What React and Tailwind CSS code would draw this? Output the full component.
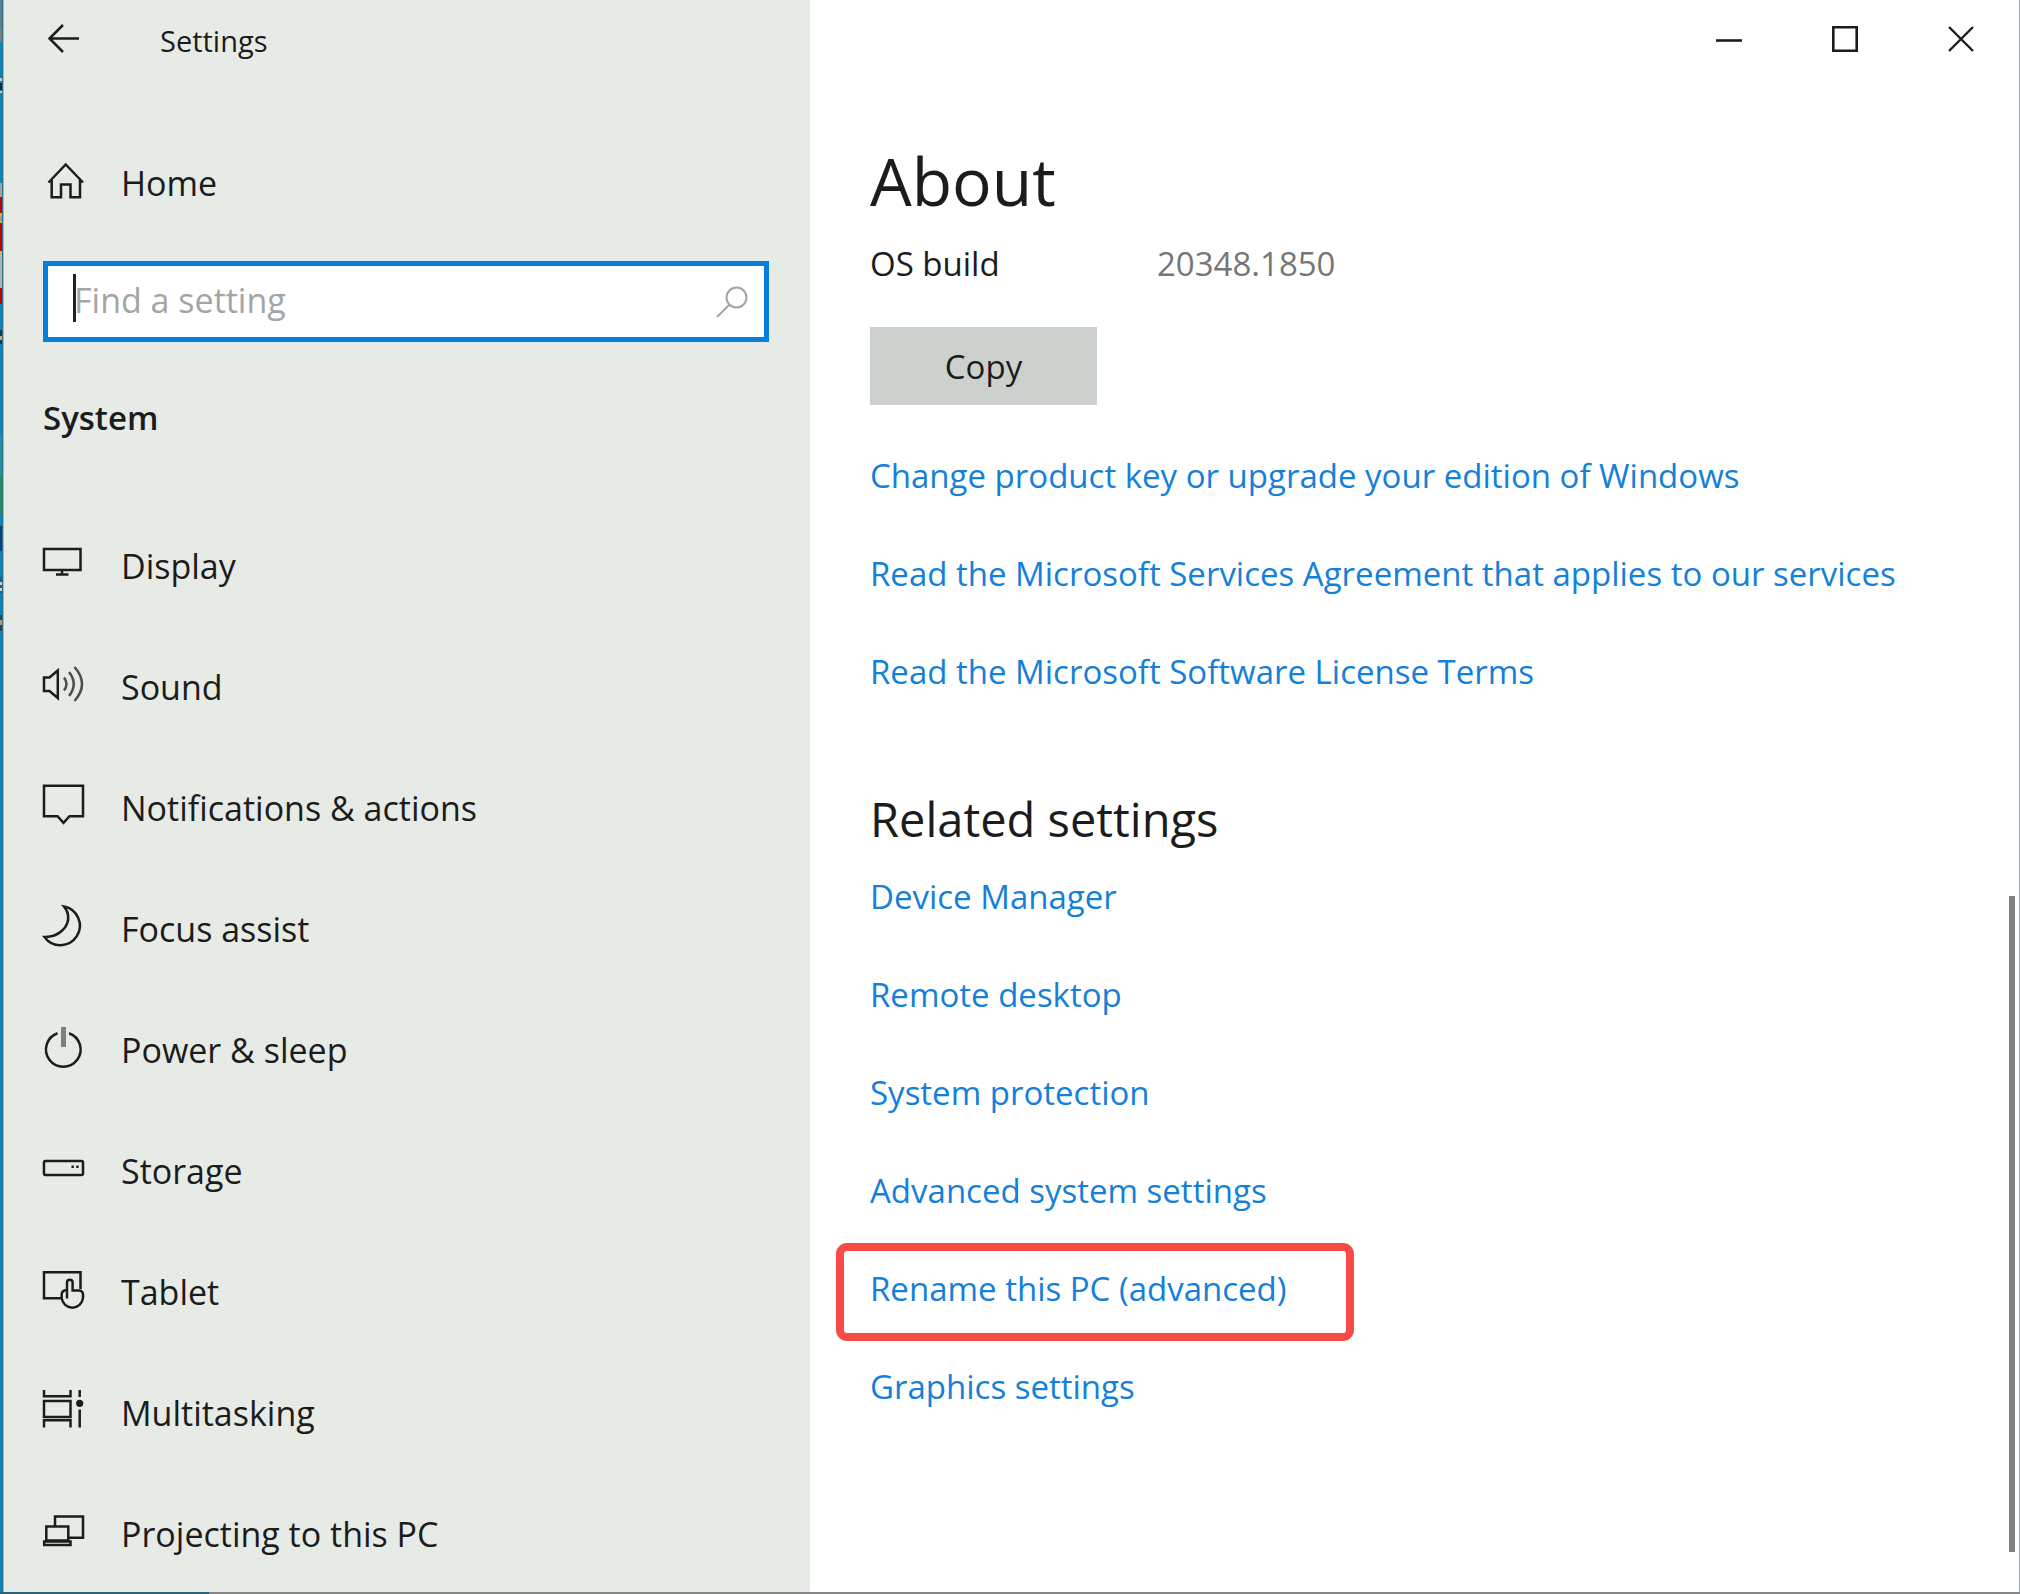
const NAV_ITEMS = [
  {
    label: 'Display',
    icon: (
      <>
        <rect x="1" y="4" width="36.5" height="21" />
        <path d="M19 25v4.5M13 29.5h12.5" />
      </>
    ),
  },
  {
    label: 'Sound',
    icon: (
      <>
        <path d="M1 11.5h5.5L14.8 4.5v27.5L6.5 25H1z" />
        <path d="M21 11.5q5 6.5 0 13M26 6q9.5 12 0 24M31.5 1q15 17 0 34" stroke="#4b4e4b" />
      </>
    ),
  },
  {
    label: 'Notifications & actions',
    icon: <path d="M1-1.2H40V29.2H26.5L20.5 35.8L14.5 29.2H1z" />,
  },
  {
    label: 'Focus assist',
    icon: <path d="M21-1.5A19.5 19.5 0 1 1 1.5 29C14 29.5 27 20 25 7C24.8 4 23 1 21-1.5z" />,
  },
  {
    label: 'Power & sleep',
    icon: (
      <>
        <path d="M14.5 4.2A17.3 17.3 0 1 0 26.1 4.2" />
        <path d="M20.5-2v20" stroke="#7d817d" strokeWidth="5" />
      </>
    ),
  },
  {
    label: 'Storage',
    icon: (
      <>
        <rect x="1" y="11" width="39" height="14" rx="1.5" />
        <path d="M28.5 16.7h2.4M33.2 16.7h2.4" />
      </>
    ),
  },
  {
    label: 'Tablet',
    icon: (
      <>
        <path d="M18 27.2H1V1.2H37.5V18" />
        <path d="M24 27.5V11.5a2.8 2.8 0 0 1 5.6 0V19.5H36Q40 20 40 23.5V27A10.7 10.7 0 0 1 18.7 27V23Q19 19.5 24 19" />
      </>
    ),
  },
  {
    label: 'Multitasking',
    icon: (
      <>
        <path d="M1-2V4.2H27.5V-2M1 9h26.5v16H1zM1 35.5V28.2H27.5V35.5M36.7-2V5M36.7 17.5V35.5" />
        <circle cx="36.7" cy="11.3" r="3.6" fill="currentColor" stroke="none" />
      </>
    ),
  },
  {
    label: 'Projecting to this PC',
    icon: <path d="M12 13V3.5H40V24.8H25.5M3.3 13.5h22v14H3.3zM1.2 28.5h26.3v3.5H1.2z" />,
  },
]

const PRODUCT_LINKS = [
  'Change product key or upgrade your edition of Windows',
  'Read the Microsoft Services Agreement that applies to our services',
  'Read the Microsoft Software License Terms',
]

const RELATED_LINKS = [
  { label: 'Device Manager' },
  { label: 'Remote desktop' },
  { label: 'System protection' },
  { label: 'Advanced system settings' },
  { label: 'Rename this PC (advanced)', highlighted: true },
  { label: 'Graphics settings' },
]

// [start y, height, color] of whatever the desktop shows beside the window
const DESKTOP_BANDS = [
  [0, 28, '#5c7f90'],
  [28, 14, '#7d7d7d'],
  [78, 3, '#c9c9c9'],
  [83, 7, '#10202c'],
  [91, 2, '#c9c9c9'],
  [183, 14, '#a5a5a5'],
  [197, 16, '#c40000'],
  [213, 3, '#c9c400'],
  [216, 5, '#9a9a9a'],
  [221, 2, '#c9c400'],
  [223, 28, '#c40000'],
  [251, 2, '#c9c400'],
  [253, 35, '#b3b3b3'],
  [288, 16, '#c40000'],
  [330, 14, '#123c58'],
  [336, 4, '#c7a878'],
  [435, 40, '#1f93a0'],
  [475, 38, '#2a8a5c'],
  [526, 25, '#0d3f7c'],
  [577, 16, '#2d5a72'],
  [582, 3, '#d0d0d0'],
  [588, 3, '#d0d0d0'],
  [615, 16, '#23465c'],
  [620, 5, '#c09a70'],
]

function Icon({ children }) {
  return (
    <svg
      width="41"
      height="41"
      viewBox="0 0 41 41"
      fill="none"
      stroke="currentColor"
      strokeWidth="2.5"
      className="shrink-0 overflow-visible"
      aria-hidden="true"
    >
      {children}
    </svg>
  )
}

function DesktopEdge() {
  return (
    <svg className="w-[4px] h-full shrink-0" aria-hidden="true">
      <rect width="3" height="100%" fill="#0088bf" />
      {DESKTOP_BANDS.map(([y, height, color]) => (
        <rect key={y} y={y} width="3" height={height} fill={color} />
      ))}
      <rect x="2" width="1" height="100%" fill="#2f6f8a" />
      <rect x="3" width="1" height="100%" fill="#a9b8b8" />
    </svg>
  )
}

function Sidebar() {
  return (
    <aside className="w-[806px] shrink-0 flex flex-col bg-[#e6ebe6] text-[34px] overflow-hidden">
      <div className="h-[82px] shrink-0 flex items-center pl-[39px]">
        <button type="button" aria-label="Back" className="flex">
          <Icon>
            <path d="M36 17.5H7M20 4L6.5 17.5L20 31" />
          </Icon>
        </button>
        <h1 className="text-[29px] leading-[36px] pl-[76px]">Settings</h1>
      </div>

      <a href="#home" className="h-[121px] mt-[40px] shrink-0 flex items-center gap-[37px] pl-[39px]">
        <Icon>
          <path d="M5.5 20.5L22.7 2.5L40 20.5M8.7 18V35.2H18V22.5H27.5V35.2H37V18" />
        </Icon>
        Home
      </a>

      <label className="relative h-[81px] mt-[18px] ml-[39px] mr-[41px] shrink-0 flex items-center border-[5px] border-[#0580dc] bg-white">
        <input
          type="text"
          aria-label="Find a setting"
          placeholder="Find a setting"
          className="w-full h-full pl-[26px] pb-1 bg-transparent outline-none placeholder:text-[#a3a5a3]"
        />
        <span className="absolute left-[25px] top-[8px] w-[3px] h-[48px] bg-[#222]" />
        <svg
          width="32"
          height="32"
          viewBox="0 0 32 32"
          fill="none"
          stroke="#a3a5a3"
          strokeWidth="2"
          className="shrink-0 mr-[16px]"
          aria-hidden="true"
        >
          <circle cx="20.5" cy="11.5" r="10" />
          <path d="M13.5 18.5L1 31" />
        </svg>
      </label>

      <h2 className="font-semibold text-[33px] mt-[54px] mb-[65px] pl-[39px] shrink-0">System</h2>

      <nav className="flex-1 min-h-0 overflow-hidden">
        {NAV_ITEMS.map(({ label, icon }) => (
          <a
            key={label}
            href="#system"
            className="h-[121px] flex items-center gap-[37px] pl-[39px] whitespace-nowrap"
          >
            <Icon>{icon}</Icon>
            {label}
          </a>
        ))}
      </nav>
    </aside>
  )
}

function WindowButtons() {
  return (
    <div className="h-[78px] shrink-0 flex justify-end">
      <button type="button" aria-label="Minimize" className="w-[116px] flex items-center justify-center">
        <svg width="26" height="26" stroke="currentColor" strokeWidth="2.6" aria-hidden="true">
          <path d="M0 14.5h26" />
        </svg>
      </button>
      <button type="button" aria-label="Maximize" className="w-[116px] flex items-center justify-center">
        <svg width="26" height="26" fill="none" stroke="currentColor" strokeWidth="2.6" aria-hidden="true">
          <path d="M1.3 1.3h23.4v23.4H1.3z" />
        </svg>
      </button>
      <button type="button" aria-label="Close" className="w-[116px] flex items-center justify-center">
        <svg width="26" height="26" stroke="currentColor" strokeWidth="2.4" aria-hidden="true">
          <path d="M1 1l24 24M25 1L1 25" />
        </svg>
      </button>
    </div>
  )
}

function LinkRow({ label, highlighted = false }) {
  return (
    <li className="relative h-[98px] pb-[6px] flex items-center whitespace-nowrap">
      <a href="#link" className="text-[#1480d8]">
        {label}
      </a>
      {highlighted && (
        <span className="absolute inset-y-0 -left-[34px] w-[518px] rounded-[11px] border-[8px] border-[#f84b47] pointer-events-none" />
      )}
    </li>
  )
}

export default function App() {
  return (
    <div className="h-screen flex flex-col overflow-hidden bg-white text-[#1c1c1c] font-['Open_Sans','Noto_Sans',sans-serif] text-[33px] leading-[44px]">
      <div className="flex-1 min-h-0 flex">
        <DesktopEdge />
        <Sidebar />
        <main className="relative flex-1 min-w-0 flex flex-col border-r border-[#a0a7b4]">
          <WindowButtons />
          <div className="flex-1 min-h-0 overflow-hidden pl-[60px] pt-[57px]">
            <h2 className="text-[66px] leading-[90px]">About</h2>
            <dl className="flex mt-[17px]">
              <dt className="w-[287px]">OS build</dt>
              <dd className="text-[#767676]">20348.1850</dd>
            </dl>
            <button type="button" className="block w-[227px] h-[78px] pt-[2px] mt-[41px] bg-[#cdd1cd]">
              Copy
            </button>
            <ul className="mt-[25px]">
              {PRODUCT_LINKS.map((label) => (
                <LinkRow key={label} label={label} />
              ))}
            </ul>
            <h3 className="text-[47px] leading-[60px] mt-[65px]">Related settings</h3>
            <ul className="mt-[2px]">
              {RELATED_LINKS.map((link) => (
                <LinkRow key={link.label} {...link} />
              ))}
            </ul>
          </div>
          <div className="absolute right-[4px] top-[896px] bottom-[40px] w-[6px] bg-[#808080]" />
        </main>
      </div>
      <div className="h-[2px] shrink-0 flex">
        <div className="w-[209px] bg-[#2a6577]" />
        <div className="flex-1 bg-[#858585]" />
      </div>
    </div>
  )
}
